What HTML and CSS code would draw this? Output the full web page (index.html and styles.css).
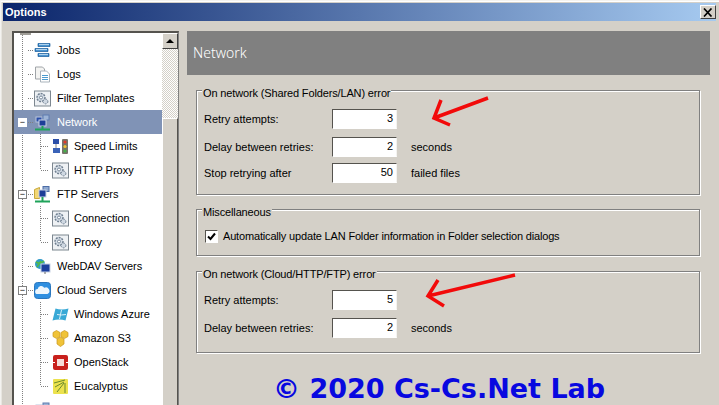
FILE: index.html
```html
<!DOCTYPE html>
<html lang="en">
<head>
<meta charset="utf-8">
<title>Options</title>
<link rel="stylesheet" href="styles.css">
</head>
<body>
<svg class="defs" width="0" height="0" aria-hidden="true">
  <symbol id="gear" viewBox="0 0 17 16">
    <rect x="0.5" y="0.5" width="16" height="15" fill="#eef1f4" stroke="#7d8790"/>
    <circle cx="7" cy="7" r="4" fill="#d5dde6" stroke="#6f7f90" stroke-width="1.4" stroke-dasharray="2 1"/>
    <circle cx="7" cy="7" r="1.5" fill="#fff" stroke="#77889a"/>
    <circle cx="11.5" cy="11" r="2.4" fill="#cfd8e2" stroke="#6f7f90" stroke-dasharray="1.5 1"/>
  </symbol>
  <symbol id="net" viewBox="0 0 17 17">
    <rect x="2" y="3" width="6" height="5" fill="#2b4fa8" stroke="#b9c6dd"/>
    <rect x="9" y="1" width="6" height="5" fill="#9db4d6" stroke="#5f7cb0"/>
    <rect x="5" y="6" width="7" height="6" fill="#1d3d98" stroke="#c9d4e6"/>
    <path d="M8.5 12v3M1 15.5h15" stroke="#1fa35a" stroke-width="2" fill="none"/>
  </symbol>
</svg>

<div class="window">
  <header class="titlebar">
    <span class="title">Options</span>
    <span class="close">
      <svg width="10" height="9" viewBox="0 0 10 9"><path d="M1 0.5l7.5 8M8.5 0.5L1 8.5" stroke="#000" stroke-width="1.7" fill="none"/></svg>
    </span>
  </header>

  <div class="client">
    <nav class="tree">
      <div class="tree-list">
        <div class="cap"></div>
        <div class="row"><i class="twist none"></i><i class="dash"></i>
          <svg class="ico" viewBox="0 0 17 16"><path d="M4 1h12v3H4zM1 6h13v3H1zM4 11h11v3H4z" fill="#2f83c8" stroke="#1c5f9c" stroke-width=".7"/><path d="M5 2.2h10M2 7.2h11M5 12.2h9" stroke="#cfe6f7"/></svg>
          <span>Jobs</span></div>
        <div class="row"><i class="twist none"></i><i class="dash"></i>
          <svg class="ico" viewBox="0 0 17 16"><path d="M1.500.5h7l2 2v10h-9z" fill="#f4f4f2" stroke="#a0a4a8"/><path d="M6.500 4.500h6l3 3v8h-9z" fill="#fff" stroke="#a9b3bb"/><path d="M8 9h6M8 11h6M8 13h6" stroke="#4a9bd0"/></svg>
          <span>Logs</span></div>
        <div class="row"><i class="twist none"></i><i class="dash"></i>
          <svg class="ico"><use href="#gear"/></svg><span>Filter Templates</span></div>
        <div class="row selected"><i class="twist">−</i><i class="dash"></i>
          <svg class="ico"><use href="#net"/></svg><span>Network</span></div>
        <div class="row sub"><i class="stem"></i><i class="dash short"></i>
          <svg class="ico" viewBox="0 0 17 17"><rect x="1" y="1" width="6" height="5" fill="#2b4fa8"/><rect x="1" y="10" width="7" height="5" fill="#3a63b8"/><path d="M4 6v4" stroke="#888"/><rect x="10" y="1" width="6" height="15" rx="1" fill="#77736a"/><circle cx="13" cy="4" r="1.600" fill="#e03a2a"/><circle cx="13" cy="8.500" r="1.600" fill="#f2c12e"/><circle cx="13" cy="13" r="1.600" fill="#46b04a"/></svg>
          <span>Speed Limits</span></div>
        <div class="row sub"><i class="stem last"></i><i class="dash short"></i>
          <svg class="ico"><use href="#gear"/></svg><span>HTTP Proxy</span></div>
        <div class="row"><i class="twist">−</i><i class="dash"></i>
          <svg class="ico" viewBox="0 0 17 17"><path d="M0.500 3.500l5-2v11h-5z" fill="#f2d774" stroke="#c9a93c"/><rect x="9" y="0.500" width="6" height="5" fill="#8fa9d0" stroke="#4d6da6"/><rect x="5" y="4" width="7" height="7" fill="#1d3d98" stroke="#c9d4e6"/><path d="M8.500 11v4M1 15.500h15" stroke="#1fa35a" stroke-width="2" fill="none"/></svg>
          <span>FTP Servers</span></div>
        <div class="row sub"><i class="stem"></i><i class="dash short"></i>
          <svg class="ico"><use href="#gear"/></svg><span>Connection</span></div>
        <div class="row sub"><i class="stem last"></i><i class="dash short"></i>
          <svg class="ico"><use href="#gear"/></svg><span>Proxy</span></div>
        <div class="row"><i class="twist none"></i><i class="dash"></i>
          <svg class="ico" viewBox="0 0 17 17"><circle cx="6" cy="6" r="5" fill="#2f9ac9"/><path d="M2 4q4 3 8-1M3 9l4-6" stroke="#54b948" stroke-width="1.600" fill="none"/><rect x="7" y="6" width="9" height="8" fill="#1c3f9e" stroke="#c7d2e4"/><path d="M11 14v2" stroke="#666"/></svg>
          <span>WebDAV Servers</span></div>
        <div class="row"><i class="twist">−</i><i class="dash"></i>
          <svg class="ico" viewBox="0 0 17 17"><rect x="0.500" y="0.500" width="16" height="16" rx="3" fill="#2f8fe0" stroke="#2a76bd"/><path d="M3.500 12a2.500 2.500 0 0 1 .2-5 3.500 3.500 0 0 1 6.500-1.200A3 3 0 0 1 13.500 12z" fill="#eef6fc"/></svg>
          <span>Cloud Servers</span></div>
        <div class="row sub"><i class="stem"></i><i class="dash short"></i>
          <svg class="ico" viewBox="0 0 17 17"><path d="M3.500 2.500q6 2 13 0l-3 12q-6-2-13 0z" fill="#39a9d6"/><path d="M5 8.500q4 1 9 0M9.500 4l-2 9" stroke="#d9f0f9" fill="none"/></svg>
          <span>Windows Azure</span></div>
        <div class="row sub"><i class="stem"></i><i class="dash short"></i>
          <svg class="ico" viewBox="0 0 17 17"><path d="M1 2.500l3.500-2 3.500 2v4l-3.500 2-3.500-2zM9 2.500l3.500-2 3.500 2v4l-3.500 2-3.500-2zM5 9l3.500-2L12 9v5l-3.500 2.500L5 14z" fill="#f0c338" stroke="#c9971c" stroke-width=".7"/></svg>
          <span>Amazon S3</span></div>
        <div class="row sub"><i class="stem"></i><i class="dash short"></i>
          <svg class="ico" viewBox="0 0 17 17"><rect x="1" y="1" width="15" height="15" rx="2" fill="#c8201c"/><rect x="5" y="5" width="7" height="7" fill="#f6dcd8"/><path d="M1 8.500h2M14 8.500h2" stroke="#fff"/></svg>
          <span>OpenStack</span></div>
        <div class="row sub"><i class="stem last"></i><i class="dash short"></i>
          <svg class="ico" viewBox="0 0 17 17"><rect x="1" y="1" width="15" height="15" rx="1" fill="#ece24e"/><path d="M2 5l11-3M3 9l9-5M5 14l7-9M13 15V5" stroke="#6a8a2c" fill="none"/></svg>
          <span>Eucalyptus</span></div>
        <div class="row"><i class="twist none"></i><i class="dash"></i>
          <svg class="ico"><use href="#net"/></svg></div>
      </div>
      <div class="scrollbar">
        <div class="scroll-btn"><i class="up"></i></div>
        <div class="scroll-track"></div>
        <div class="scroll-thumb"></div>
      </div>
    </nav>

    <main class="panel">
      <h1 class="panel-head">Network</h1>

      <section class="group group-lan">
        <div class="legend">On network (Shared Folders/LAN) error</div>
        <div class="form-row"><label>Retry attempts:</label><div class="field">3</div></div>
        <div class="form-row gap-wide"><label>Delay between retries:</label><div class="field">2</div><span>seconds</span></div>
        <div class="form-row gap-tight"><label>Stop retrying after</label><div class="field">50</div><span>failed files</span></div>
      </section>

      <section class="group group-misc">
        <div class="legend">Miscellaneous</div>
        <div class="check-row">
          <span class="check"><svg width="9" height="9" viewBox="0 0 9 9"><path d="M1 4.500l2.500 2.500L8 1.500" stroke="#000" stroke-width="2" fill="none"/></svg></span>
          <span class="check-label">Automatically update LAN Folder information in Folder selection dialogs</span>
        </div>
      </section>

      <section class="group group-cloud">
        <div class="legend">On network (Cloud/HTTP/FTP) error</div>
        <div class="form-row"><label>Retry attempts:</label><div class="field">5</div></div>
        <div class="form-row gap-wide"><label>Delay between retries:</label><div class="field">2</div><span>seconds</span></div>
      </section>
    </main>
  </div>
</div>

<svg class="arrows" width="719" height="405" viewBox="0 0 719 405" aria-hidden="true">
  <path d="M488 98L434 118M441 100L434 118L450 125M515 275L428 296M438 280L428 296L444 306" fill="none" stroke="#f20a0a" stroke-width="3.500"/>
</svg>
<div class="watermark">© 2020 Cs-Cs.Net Lab</div>
</body>
</html>
```
FILE: styles.css
```css
* { box-sizing: border-box; }
html, body { margin: 0; height: 405px; overflow: hidden; }
body {
  position: relative;
  background: #d4d0c8;
  color: #000;
  font: 11px/13px "Liberation Sans", Arial, sans-serif;
}
.defs { position: absolute; }
i { display: block; font-style: normal; }

.window {
  height: 405px;
  display: flex;
  flex-direction: column;
  padding: 3px 3px 0;
  border-top: 1px solid #f4f3f0;
  border-left: 1px solid #f4f3f0;
  box-shadow: inset 0 1px 0 #fff, inset 1px 0 0 #e8e6e0;
}
.titlebar {
  flex: none;
  height: 18px;
  margin-left: -1px;
  margin-top: -1px;
  display: flex;
  align-items: center;
  justify-content: space-between;
  padding: 0 0 0 2px;
  background: linear-gradient(90deg, #0a246a, #a6caf0);
  color: #fff;
}
.title { font-weight: 700; font-size: 11px; }
.close {
  width: 16px;
  height: 14px;
  display: flex;
  align-items: center;
  justify-content: center;
  background: #d4d0c8;
  border: 1px solid;
  border-color: #fff #404040 #404040 #fff;
}

.client {
  flex: 1;
  min-height: 0;
  display: flex;
  margin: 0 -3px 0 -3px;
  padding: 10px 9px 0 11px;
  gap: 9px;
}

.tree {
  flex: none;
  width: 167px;
  height: 390px;
  display: flex;
  background: #fff;
  border-style: solid;
  border-width: 2px 1px 0 2px;
  border-color: #55534e #808080 #d4d0c8 #55534e;
  overflow: hidden;
}
.tree-list {
  flex: none;
  width: 148px;
  padding-top: 5px;
  background-image: linear-gradient(#808080 50%, transparent 50%);
  background-size: 1px 2px;
  background-position: 8px 0;
  background-repeat: repeat-y;
  position: relative;
}
.cap {
  position: absolute;
  top: 0;
  left: 6px;
  width: 11px;
  height: 2px;
  background: #a09e98;
}
.row {
  height: 24px;
  display: flex;
  align-items: center;
  padding-left: 4px;
  white-space: nowrap;
}
.row span { margin-left: 6px; }
.row.sub { padding-left: 26px; }
.row.sub span { margin-left: 5px; }
.twist {
  flex: none;
  width: 9px;
  height: 9px;
  border: 1px solid #808080;
  background: #fff;
  font: 9px/7px "Liberation Sans", sans-serif;
  text-align: center;
}
.twist.none { border: 0; background: none; }
.dash {
  flex: none;
  width: 6px;
  height: 1px;
  margin-left: 1px;
  margin-right: 0;
  background-image: linear-gradient(90deg, #808080 50%, transparent 50%);
  background-size: 2px 1px;
}
.dash.short { width: 8px; margin: 0 3px 0 0; }
.stem {
  flex: none;
  width: 1px;
  height: 24px;
  align-self: flex-start;
  background-image: linear-gradient(#808080 50%, transparent 50%);
  background-size: 1px 2px;
}
.stem.last { height: 12px; }
.ico { flex: none; width: 17px; height: 17px; }
.selected { background: #8093b6; color: #fff; }
.selected .twist { border-color: #fff; color: #000; }

.scrollbar {
  flex: none;
  width: 16px;
  position: relative;
  display: flex;
  flex-direction: column;
}
.scroll-btn {
  height: 16px;
  display: flex;
  align-items: center;
  justify-content: center;
  background: #d4d0c8;
  border: 1px solid;
  border-color: #fff #404040 #404040 #fff;
}
.up {
  width: 0;
  height: 0;
  border: 4px solid transparent;
  border-top: 0;
  border-bottom: 4px solid #000;
}
.scroll-track {
  height: 69px;
  background-color: #fff;
  background-image: conic-gradient(#d4d0c8 25%, #fff 0 50%, #d4d0c8 0 75%, #fff 0);
  background-size: 2px 2px;
}
.scroll-thumb {
  flex: 1;
  background: #d4d0c8;
  border: 1px solid;
  border-color: #fff #55534e #55534e #fff;
}

.panel {
  flex: 1;
  min-width: 0;
  margin-left: -1px;
}
.panel-head {
  margin: 0;
  height: 44px;
  padding-left: 6px;
  background: #808080;
  color: #fff;
  font: 300 14px/44px "Noto Sans", "Liberation Sans", sans-serif;
}
.group {
  position: relative;
  margin: 0 10px 0 9px;
  border: 1px solid #808080;
  box-shadow: 1px 1px 0 #fff, inset 1px 1px 0 #fff;
  padding: 18px 0 0 7px;
}
.group-lan { margin-top: 15px; height: 105px; }
.group-misc { margin-top: 14px; height: 47px; }
.group-cloud { margin-top: 15px; height: 82px; }
.legend {
  position: absolute;
  top: -4px;
  left: 5px;
  padding: 0 1px 0 1px;
  letter-spacing: -0.14px;
  background: #d4d0c8;
}
.form-row {
  display: grid;
  grid-template-columns: 128px 65px auto;
  align-items: center;
  height: 20px;
}
.form-row span { margin-left: 14px; }
.gap-wide { margin-top: 8px; }
.gap-tight { margin-top: 6px; }
.field {
  height: 20px;
  padding: 0 3px 0 0;
  text-align: right;
  line-height: 17px;
  background: #fff;
  border: 1px solid;
  border-color: #55534e #f4f3f0 #fff #55534e;
}
.check-row {
  display: flex;
  align-items: center;
  gap: 5px;
  margin-top: 2px;
  padding-left: 1px;
}
.check-label { letter-spacing: -0.17px; }
.check {
  flex: none;
  width: 13px;
  height: 13px;
  display: flex;
  align-items: center;
  justify-content: center;
  background: #fff;
  border: 1px solid;
  border-color: #55534e #fff #fff #55534e;
}

.arrows { position: absolute; top: 0; left: 0; pointer-events: none; }
.watermark {
  position: absolute;
  left: 273px;
  top: 373px;
  color: #0808e0;
  font: 700 27px/32px "DejaVu Sans", sans-serif;
  white-space: nowrap;
}
```
